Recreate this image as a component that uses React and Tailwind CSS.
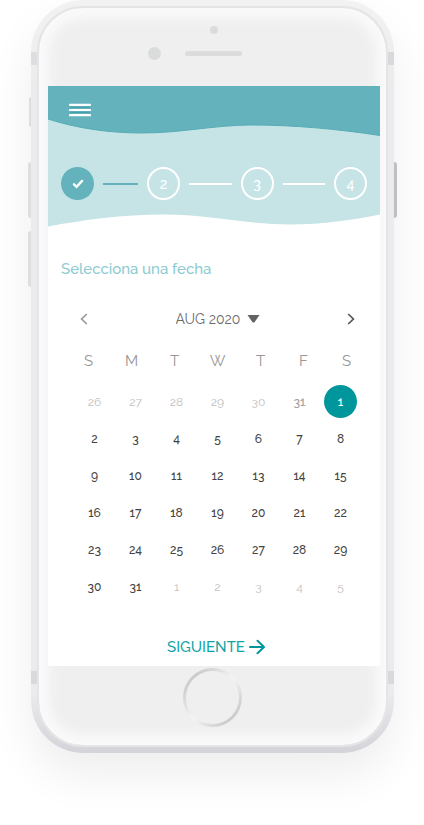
import React, { useState } from "react";

const WEEKDAYS = ["S", "M", "T", "W", "T", "F", "S"];

const WEEKS = [
  [26, 27, 28, 29, 30, 31, 1],
  [2, 3, 4, 5, 6, 7, 8],
  [9, 10, 11, 12, 13, 14, 15],
  [16, 17, 18, 19, 20, 21, 22],
  [23, 24, 25, 26, 27, 28, 29],
  [30, 31, 1, 2, 3, 4, 5],
];

function isOutside(week, index, day) {
  return (week === 0 && index < 6) || (week === 5 && day < 8);
}

function dayClass(week, index, day, selected) {
  if (selected) return "bg-[#00979c] text-white font-medium";
  if (week === 0 && index === 5) return "text-[#a0a0a0] font-medium";
  if (isOutside(week, index, day)) return "text-[#c0c0c0]";
  return "text-[#444444] font-medium";
}

function Header() {
  return (
    <header className="relative bg-white pt-[17px] pb-7">
      <svg
        className="absolute inset-0 h-full w-full"
        viewBox="0 0 332 142"
        preserveAspectRatio="none"
        aria-hidden="true"
      >
        <path
          d="M0 0H332V128.5C305 134 275 138.5 242 138.5C200 138.5 160 128.5 115 128.5C75 128.5 35 134 0 140.5Z"
          fill="#c6e4e6"
        />
        <path
          d="M0 0H332V49.5C290 43 245 39 205 39C165 39 135 47 93 47C60 47 28 42 0 33Z"
          fill="#64b2bc"
        />
        <path
          d="M332 49.5C290 43 245 39 205 39C165 39 135 47 93 47C60 47 28 42 0 33"
          fill="none"
          stroke="#57adb7"
          strokeWidth="1"
        />
      </svg>
      <nav className="relative flex pl-[21px]">
        <button type="button" aria-label="Menú" className="block">
          <svg width="22" height="14" viewBox="0 0 22 14" aria-hidden="true">
            <path d="M1 4.2h20M1 9.3h20" stroke="#3b9da8" strokeWidth="1" />
            <path
              d="M1 1.8h20M1 7h20M1 12.2h20"
              stroke="#fff"
              strokeWidth="2.2"
              strokeLinecap="round"
            />
          </svg>
        </button>
      </nav>
      <ol className="relative mt-[50px] flex items-center gap-[9px] px-[13px] text-sm font-medium text-white">
        <li className="flex size-[33px] items-center justify-center rounded-full bg-[#64b2bc]">
          <svg width="12" height="10" viewBox="0 0 12 10" aria-label="1" role="img">
            <path
              d="M2 5.3L4.6 7.8L10 2"
              fill="none"
              stroke="#fff"
              strokeWidth="2.5"
              strokeLinecap="round"
            />
          </svg>
        </li>
        <li aria-hidden="true" className="h-0.5 w-[35px] bg-[#64b2bc]" />
        <li className="flex size-[33px] items-center justify-center rounded-full border-2 border-white">2</li>
        <li aria-hidden="true" className="h-0.5 flex-1 bg-white" />
        <li className="flex size-[33px] items-center justify-center rounded-full border-2 border-white">3</li>
        <li aria-hidden="true" className="h-0.5 flex-1 bg-white" />
        <li className="flex size-[33px] items-center justify-center rounded-full border-2 border-white">4</li>
      </ol>
    </header>
  );
}

function Calendar() {
  const [selected, setSelected] = useState("0-6");
  return (
    <section>
      <div className="mt-7 flex h-6 items-center justify-between pr-[25px] pl-8">
        <button type="button" aria-label="Mes anterior">
          <svg width="8" height="12" viewBox="0 0 8 12" fill="none" stroke="#9a9a9a" strokeWidth="1.7">
            <path d="M6.8 1L1.6 6L6.8 11" />
          </svg>
        </button>
        <label className="flex items-center gap-1.5 text-sm text-[#6b6b6b]">
          <select aria-label="Mes" className="appearance-none bg-transparent leading-6">
            <option>AUG 2020</option>
          </select>
          <svg width="13" height="8" viewBox="0 0 13 8" aria-hidden="true">
            <path d="M0.5 0H12.5L7.5 7.2Q6.5 8 5.5 7.2Z" fill="#636363" />
          </svg>
        </label>
        <button type="button" aria-label="Mes siguiente">
          <svg width="8" height="12" viewBox="0 0 8 12" fill="none" stroke="#555" strokeWidth="1.7">
            <path d="M1.2 1L6.4 6L1.2 11" />
          </svg>
        </button>
      </div>
      <table className="mt-[18px] block">
        <thead className="block pr-3 pl-[19px]">
          <tr className="grid grid-cols-7">
            {WEEKDAYS.map((name, i) => (
              <th key={i} scope="col" className="text-[15px] leading-6 font-normal text-[#979797]">
                {name}
              </th>
            ))}
          </tr>
        </thead>
        <tbody className="block pt-[10px] pr-[19px] pl-[26px]">
          {WEEKS.map((week, w) => (
            <tr key={w} className="grid grid-cols-7">
              {week.map((day, i) => {
                const id = `${w}-${i}`;
                return (
                  <td key={i} className="flex h-[37px] items-center justify-center">
                    <button
                      type="button"
                      onClick={() => setSelected(id)}
                      className={`size-[33px] rounded-full text-xs oldstyle-nums ${dayClass(w, i, day, selected === id)}`}
                    >
                      {day}
                    </button>
                  </td>
                );
              })}
            </tr>
          ))}
        </tbody>
      </table>
    </section>
  );
}

export default function App() {
  return (
    <main className="min-h-screen bg-white pr-[30px] pb-[72px] pl-[31px] font-['Raleway','Lato',sans-serif]">
      <div className="relative rounded-[52px] bg-linear-[180deg,#f2f2f2_0%,#ebebed_12%,#ebebed_92%,#d3d3d9_100%] p-1.5 shadow-[0_22px_46px_rgba(0,0,0,0.07)]">
        <span className="absolute top-[97px] -left-0.5 h-[30px] w-0.5 rounded-l-sm bg-[#dedede]" />
        <span className="absolute top-[162px] -left-[3px] h-14 w-[3px] rounded-l-sm bg-[#dedede]" />
        <span className="absolute top-[231px] -left-[3px] h-14 w-[3px] rounded-l-sm bg-[#dedede]" />
        <span className="absolute top-[162px] -right-[3px] h-14 w-[3px] rounded-r-sm bg-[#bfbfc1]" />
        <span className="absolute top-[52px] left-0 h-[13px] w-1.5 bg-[#dedee0]" />
        <span className="absolute top-[52px] right-0 h-[13px] w-1.5 bg-[#d9d9db]" />
        <span className="absolute bottom-[69px] left-0 h-[13px] w-1.5 bg-[#d9d9db]" />
        <span className="absolute right-0 bottom-[69px] h-[13px] w-1.5 bg-[#d9d9db]" />

        <div className="rounded-[46px] border-2 border-[#e5e5e7] bg-[#efefef] pr-1.5 pl-[9px] shadow-[inset_0_0_12px_10px_#fafafa]">
          <div className="flex flex-col items-center pt-[18px] pb-[26px]">
            <span className="size-2 rounded-full bg-[#dadcdc]" />
            <div className="mt-[13px] flex items-center gap-6 pr-[38px]">
              <span className="size-[13px] rounded-full bg-[#dadcdc]" />
              <span className="h-[5px] w-[57px] rounded-full bg-[#dcdcdc]" />
            </div>
          </div>

          <div className="bg-white">
            <Header />
            <h1 className="pt-[31px] pl-[13px] text-[15px] leading-5 font-medium text-[#8dcbd1]">
              Selecciona una fecha
            </h1>
            <Calendar />
            <div className="mt-[30px] flex justify-center pb-[7px] pl-1">
              <button type="button" className="flex items-center gap-1 text-[15px] leading-6 font-medium text-[#0fa3a7]">
                SIGUIENTE
                <svg
                  width="16"
                  height="16"
                  viewBox="0 0 16 16"
                  fill="none"
                  stroke="#00979c"
                  strokeWidth="2"
                  strokeLinecap="round"
                  strokeLinejoin="round"
                  aria-hidden="true"
                >
                  <path d="M1 8H14.5M8.5 1.8L15 8L8.5 14.2" />
                </svg>
              </button>
            </div>
          </div>

          <div className="flex justify-center pt-0.5 pr-[3px] pb-[18px]">
            <button
              type="button"
              aria-label="Inicio"
              className="size-[59px] rounded-full bg-linear-[135deg,#c4c4c4_10%,#f2f2f2_48%,#f2f2f2_54%,#c4c4c4_90%] p-[3px]"
            >
              <span className="block size-full rounded-full bg-[#efefef]" />
            </button>
          </div>
        </div>
      </div>
    </main>
  );
}
